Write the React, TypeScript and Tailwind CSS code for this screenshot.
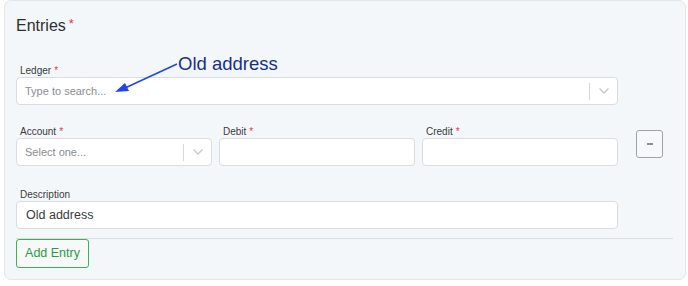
import React from "react";

const Chevron = () => (
  <svg width="12" height="8" viewBox="0 0 12 8" fill="none">
    <path d="M1.5 1.5 L6 6 L10.5 1.5" stroke="#c4c7cc" strokeWidth="1.3" fill="none" />
  </svg>
);

const Label = ({ text, req = true }: { text: string; req?: boolean }) => (
  <div className="text-[10px] leading-[16px] text-[#3a3a3a] pl-[4px] h-[14px]">
    {text}
    {req && <span className="text-[#e03a3a] ml-[3px]">*</span>}
  </div>
);

export default function App() {
  return (
    <div className="w-[688px] h-[286px] bg-white" style={{ fontFamily: '"Liberation Sans", Arial, sans-serif' }}>
      <div className="relative ml-[4px] w-[682px] h-[280px] bg-[#f4f7fa] border border-[#e2e5e9] rounded-[7px] pl-[11px]">
        <div className="pt-[15px] h-[62px] text-[16px] leading-[19px] text-[#2e2e2e]">
          Entries<span className="text-[#e03a3a] text-[13px] align-top ml-[3px] relative top-[-2px]">*</span>
        </div>
        <Label text="Ledger" />
        <div className="w-[602px] h-[28px] bg-white border border-[#d9dce1] rounded-[4px] flex items-center">
          <div className="flex-1 pl-[8px] text-[11px] text-[#8a8d91]">Type to search...</div>
          <div className="w-px h-[17px] bg-[#d4d6da]" />
          <div className="w-[27px] flex justify-center"><Chevron /></div>
        </div>
        <div className="flex mt-[19px]">
          <div className="w-[196px]">
            <Label text="Account" />
            <div className="h-[28px] bg-white border border-[#d9dce1] rounded-[4px] flex items-center">
              <div className="flex-1 pl-[8px] text-[11px] text-[#8a8d91]">Select one...</div>
              <div className="w-px h-[17px] bg-[#d4d6da]" />
              <div className="w-[27px] flex justify-center"><Chevron /></div>
            </div>
          </div>
          <div className="w-[196px] ml-[7px]">
            <Label text="Debit" />
            <div className="h-[28px] bg-white border border-[#d9dce1] rounded-[4px]" />
          </div>
          <div className="w-[196px] ml-[7px]">
            <Label text="Credit" />
            <div className="h-[28px] bg-white border border-[#d9dce1] rounded-[4px]" />
          </div>
          <div className="ml-[18px] pt-[6px]">
            <div className="w-[27px] h-[28px] bg-[#f6f8fa] border border-[#9ea3a9] rounded-[3px] flex items-center justify-center">
              <div className="w-[6px] h-[1.5px] bg-[#8a8f95]" />
            </div>
          </div>
        </div>
        <div className="mt-[21px]">
          <Label text="Description" req={false} />
          <div className="w-[602px] h-[28px] bg-white border border-[#d9dce1] rounded-[4px] flex items-center pl-[9px] text-[12.5px] text-[#3b3b3b]">
            Old address
          </div>
        </div>
        <div className="w-[657px] h-px bg-[#dadde1] mt-[9px]" />
        <div className="w-[73px] h-[29px] border border-[#3fae5a] rounded-[3px] flex items-center justify-center text-[12.5px] text-[#2a9a47] bg-[#f6f9f7]">
          Add Entry
        </div>

        <div className="absolute left-[173px] top-[53px] text-[18.5px] leading-[20px] text-[#13308f]">Old address</div>
        <svg className="absolute left-[100px] top-[55px]" width="80" height="45" viewBox="0 0 80 45">
          <line x1="72" y1="8" x2="20" y2="32" stroke="#1f45f2" strokeWidth="1.6" />
          <polygon points="10,36 20,27 24,35" fill="#1f45f2" />
        </svg>
      </div>
    </div>
  );
}
